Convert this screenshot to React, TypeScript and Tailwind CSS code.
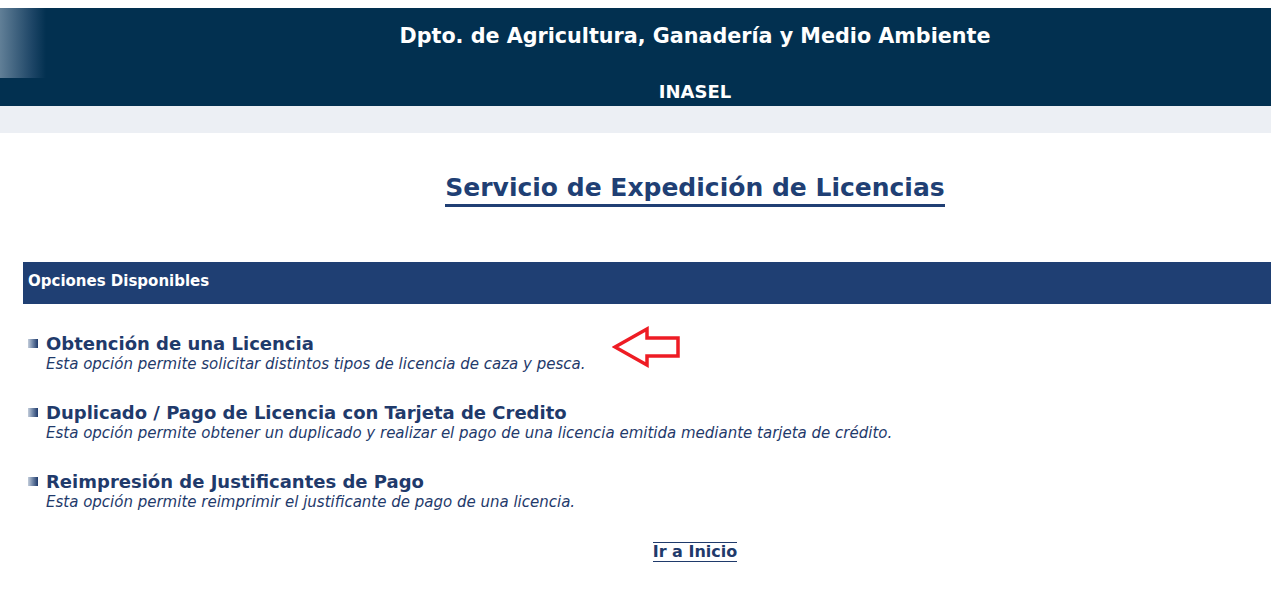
import React from "react";

const options = [
  {
    title: "Obtención de una Licencia",
    desc: "Esta opción permite solicitar distintos tipos de licencia de caza y pesca.",
  },
  {
    title: "Duplicado / Pago de Licencia con Tarjeta de Credito",
    desc: "Esta opción permite obtener un duplicado y realizar el pago de una licencia emitida mediante tarjeta de crédito.",
  },
  {
    title: "Reimpresión de Justificantes de Pago",
    desc: "Esta opción permite reimprimir el justificante de pago de una licencia.",
  },
];

function RedArrow() {
  return (
    <svg width="70" height="42" viewBox="0 0 70 42" className="absolute left-[612px] top-[326px]">
      <polygon
        points="3,21 35,3 35,12 66,12 66,30 35,30 35,39"
        fill="none"
        stroke="#ee1c24"
        strokeWidth="3.5"
        strokeLinejoin="miter"
      />
    </svg>
  );
}

export default function App() {
  return (
    <div className="relative w-full min-h-[591px] overflow-hidden bg-white font-['DejaVu_Sans',Verdana,sans-serif]">
      <div className="w-[1390px] pt-2">
        {/* Cabecera */}
        <div className="bg-[#023050] text-white">
          <div className="h-[70px] pt-[15px] text-center text-[20.7px] leading-[26px] font-bold bg-[linear-gradient(to_right,#617f97,#1d4566_70%,#023050)] bg-no-repeat bg-[length:46px_100%]">
            Dpto. de Agricultura, Ganadería y Medio Ambiente
          </div>
          <div className="h-[28px] flex items-center justify-center text-[18px] leading-[22px] font-bold">INASEL</div>
        </div>
        <div className="h-[27px] bg-[#eceff4]" />

        {/* Título */}
        <div className="flex justify-center pt-[40px]">
          <h1 className="text-[25px] font-bold text-[#203f74] border-b-[3px] border-[#203f74] leading-[30px] pb-[1px]">
            Servicio de Expedición de Licencias
          </h1>
        </div>

        {/* Opciones */}
        <div className="mt-[55px] ml-[23px] h-[42px] bg-[#1f3f73] flex items-center pl-[5px] pb-[4px] text-white text-[15px] font-bold">
          Opciones Disponibles
        </div>

        <div className="pl-[28px] pt-[28px] flex flex-col gap-[27px]">
          {options.map((o) => (
            <div key={o.title} className="text-[#1f3a6b]">
              <div className="flex items-center gap-[8px] h-[23px]">
                <span className="w-[10px] h-[9px] bg-[linear-gradient(to_right,#c3cddb,#7489a9_45%,#1f3a6b)]" />
                <span className="text-[18px] leading-[22px] font-bold">{o.title}</span>
              </div>
              <div className="pl-[18px] text-[15px] italic leading-[19px]">{o.desc}</div>
            </div>
          ))}
        </div>

        <div className="flex justify-center pt-[30px]">
          <a className="text-[16px] font-bold text-[#1f3a6b] border-y border-[#1f3a6b] leading-[18px] cursor-pointer">
            Ir a Inicio
          </a>
        </div>
      </div>

      <RedArrow />
    </div>
  );
}
